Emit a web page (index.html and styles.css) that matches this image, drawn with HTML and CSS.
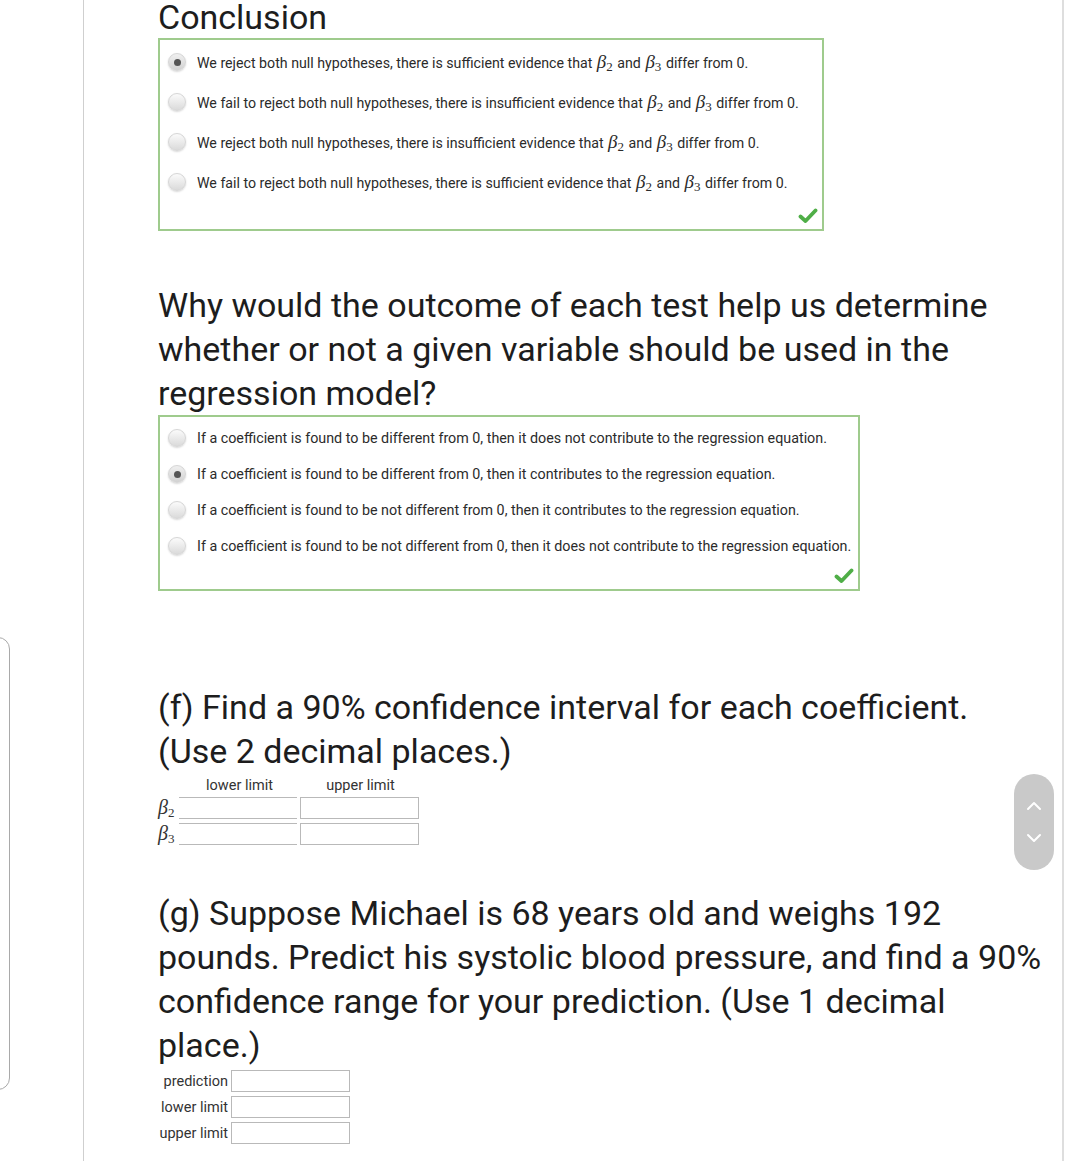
FILE: index.html
```html
<!DOCTYPE html>
<html lang="en">
<head>
<meta charset="utf-8">
<title>Regression questions</title>
<link rel="stylesheet" href="styles.css">
</head>
<body>
<div class="page">
  <aside class="side">
    <div class="side-card"></div>
  </aside>
  <main class="panel">
    <div class="content">
      <h2 class="title title-conclusion">Conclusion</h2>
      <div class="choices choices-a">
        <label class="opt"><span class="radio checked"></span><span class="opt-text">We reject both null hypotheses, there is sufficient evidence that <span class="m">β<sub>2</sub></span> and <span class="m">β<sub>3</sub></span> differ from 0.</span></label>
        <label class="opt"><span class="radio"></span><span class="opt-text">We fail to reject both null hypotheses, there is insufficient evidence that <span class="m">β<sub>2</sub></span> and <span class="m">β<sub>3</sub></span> differ from 0.</span></label>
        <label class="opt"><span class="radio"></span><span class="opt-text">We reject both null hypotheses, there is insufficient evidence that <span class="m">β<sub>2</sub></span> and <span class="m">β<sub>3</sub></span> differ from 0.</span></label>
        <label class="opt"><span class="radio"></span><span class="opt-text">We fail to reject both null hypotheses, there is sufficient evidence that <span class="m">β<sub>2</sub></span> and <span class="m">β<sub>3</sub></span> differ from 0.</span></label>
        <svg class="check" viewBox="0 0 20 16" width="20" height="16"><path d="M2.5 8.5 L7.5 13 L17.5 2.5" fill="none" stroke="#4fae47" stroke-width="3.8" stroke-linecap="round" stroke-linejoin="round"/></svg>
      </div>

      <h2 class="title title-why">Why would the outcome of each test help us determine<br>whether or not a given variable should be used in the<br>regression model?</h2>
      <div class="choices choices-b">
        <label class="opt"><span class="radio"></span><span class="opt-text">If a coefficient is found to be different from 0, then it does not contribute to the regression equation.</span></label>
        <label class="opt"><span class="radio checked"></span><span class="opt-text">If a coefficient is found to be different from 0, then it contributes to the regression equation.</span></label>
        <label class="opt"><span class="radio"></span><span class="opt-text">If a coefficient is found to be not different from 0, then it contributes to the regression equation.</span></label>
        <label class="opt"><span class="radio"></span><span class="opt-text">If a coefficient is found to be not different from 0, then it does not contribute to the regression equation.</span></label>
        <svg class="check" viewBox="0 0 20 16" width="20" height="16"><path d="M2.5 8.5 L7.5 13 L17.5 2.5" fill="none" stroke="#4fae47" stroke-width="3.8" stroke-linecap="round" stroke-linejoin="round"/></svg>
      </div>

      <h2 class="title title-f">(f) Find a 90% confidence interval for each coefficient.<br>(Use 2 decimal places.)</h2>
      <div class="ci-table">
        <div class="ci-row ci-head">
          <span class="ci-label"></span>
          <span class="ci-col">lower limit</span>
          <span class="ci-col">upper limit</span>
        </div>
        <div class="ci-row">
          <span class="ci-label"><span class="m m-lg">β<sub>2</sub></span></span>
          <span class="field field-open"></span>
          <span class="field"></span>
        </div>
        <div class="ci-row">
          <span class="ci-label"><span class="m m-lg">β<sub>3</sub></span></span>
          <span class="field field-open"></span>
          <span class="field"></span>
        </div>
      </div>

      <h2 class="title title-g">(g) Suppose Michael is 68 years old and weighs 192<br>pounds. Predict his systolic blood pressure, and find a 90%<br>confidence range for your prediction. (Use 1 decimal<br>place.)</h2>
      <div class="pred-table">
        <div class="pred-row"><span class="pred-label">prediction</span><span class="field"></span></div>
        <div class="pred-row"><span class="pred-label">lower limit</span><span class="field"></span></div>
        <div class="pred-row"><span class="pred-label">upper limit</span><span class="field"></span></div>
      </div>
    </div>
  </main>
  <div class="scroller">
    <svg viewBox="0 0 40 96" width="40" height="96">
      <polyline points="14,35 20,29 26,35" fill="none" stroke="#ffffff" stroke-width="2" stroke-linecap="round" stroke-linejoin="round"/>
      <polyline points="14,61 20,67 26,61" fill="none" stroke="#ffffff" stroke-width="2" stroke-linecap="round" stroke-linejoin="round"/>
    </svg>
  </div>
</div>
</body>
</html>
```

FILE: styles.css
```css
* {
  box-sizing: border-box;
}

html, body {
  margin: 0;
  padding: 0;
  background: #ffffff;
}

body {
  font-family: Roboto, "Liberation Sans", Arial, sans-serif;
  color: #222222;
}

.page {
  position: relative;
  display: flex;
  width: 1080px;
  height: 1161px;
  overflow: hidden;
}

.side {
  width: 83px;
  flex: none;
}

.side-card {
  margin-top: 637px;
  margin-left: -30px;
  width: 40px;
  height: 453px;
  border: 1px solid #a9a9a9;
  border-radius: 12px;
}

.panel {
  width: 981px;
  flex: none;
  border-left: 1px solid #cfcfcf;
  border-right: 2px solid #dedede;
  padding-left: 74px;
}

.content {
  width: 900px;
}

.title {
  margin: 0;
  font-size: 34px;
  font-weight: 400;
  line-height: 44px;
  color: #1d1d1d;
  white-space: nowrap;
}

.title-conclusion {
  line-height: 34px;
  margin-bottom: 4px;
}

.title-why {
  margin-top: 52px;
}

.title-f {
  margin-top: 94px;
}

.title-g {
  margin-top: 46px;
}

.choices {
  position: relative;
  border: 2px solid #9fcb8d;
  padding-left: 8px;
}

.choices-a {
  width: 666px;
  padding-top: 2px;
  padding-bottom: 27px;
}

.choices-b {
  width: 702px;
  padding-top: 3px;
  padding-bottom: 25px;
}

.opt {
  display: flex;
  align-items: center;
  color: #2b2b2b;
  white-space: nowrap;
}

.choices-a .opt {
  height: 40px;
  font-size: 14.2px;
}

.choices-b .opt {
  height: 36px;
  font-size: 14.3px;
}

.radio {
  flex: none;
  width: 18px;
  height: 18px;
  border-radius: 50%;
  border: 1px solid #d6d6d6;
  background: linear-gradient(#fbfbfb, #dadada);
  box-shadow: 0 1px 2px rgba(0, 0, 0, 0.16);
  margin-right: 11px;
  position: relative;
}

.radio.checked {
  background: linear-gradient(#f0f0f0, #d2d2d2);
}

.radio.checked::after {
  content: "";
  position: absolute;
  left: 4.5px;
  top: 4.5px;
  width: 7px;
  height: 7px;
  border-radius: 50%;
  background: #555555;
}

.m {
  font-family: "Liberation Serif", "Times New Roman", serif;
  font-style: italic;
  font-size: 19px;
  line-height: 1;
  margin: 0 1px;
}

.m sub {
  font-style: normal;
  font-size: 13px;
  vertical-align: -3px;
  line-height: 1;
}

.m-lg {
  font-size: 20px;
  margin: 0;
}

.check {
  position: absolute;
  right: 4px;
  bottom: 5px;
}

.ci-table {
  display: flex;
  flex-direction: column;
  gap: 4px;
}

.ci-row {
  display: flex;
  align-items: center;
  height: 22px;
}

.ci-head {
  height: 24px;
  margin-bottom: -4px;
  font-size: 14.5px;
  color: #333333;
}

.ci-label {
  width: 21px;
  flex: none;
  color: #333333;
}

.ci-col {
  width: 121px;
  text-align: center;
}

.field {
  display: block;
  width: 119px;
  height: 22px;
  border: 1px solid #b9b9b9;
  background: #ffffff;
  flex: none;
}

.field-open {
  border-left: none;
  border-right: none;
  width: 118px;
  margin-right: 3px;
}

.pred-table {
  margin-top: 3px;
  display: flex;
  flex-direction: column;
  gap: 4px;
}

.pred-row {
  display: flex;
  align-items: center;
  height: 22px;
  font-size: 14.5px;
  color: #333333;
}

.pred-label {
  width: 73px;
  text-align: right;
  padding-right: 3px;
  flex: none;
}

.scroller {
  position: absolute;
  left: 1014px;
  top: 774px;
  width: 40px;
  height: 96px;
  border-radius: 20px;
  background: #c9c9c9;
}

.scroller svg {
  display: block;
}
```
